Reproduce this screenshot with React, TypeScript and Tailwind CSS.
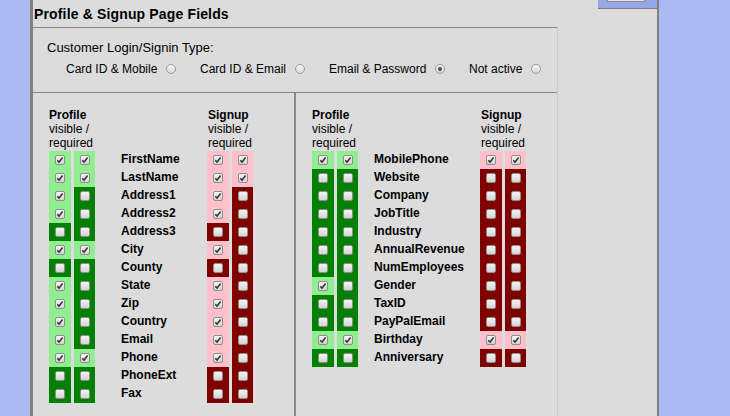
import React from "react";

type Row = [string, number, number, number, number];

const LEFT_ROWS: Row[] = [
  ["FirstName", 1, 1, 1, 1],
  ["LastName", 1, 1, 1, 1],
  ["Address1", 1, 0, 1, 0],
  ["Address2", 1, 0, 1, 0],
  ["Address3", 0, 0, 0, 0],
  ["City", 1, 1, 1, 0],
  ["County", 0, 0, 0, 0],
  ["State", 1, 0, 1, 0],
  ["Zip", 1, 0, 1, 0],
  ["Country", 1, 0, 1, 0],
  ["Email", 1, 0, 1, 0],
  ["Phone", 1, 1, 1, 0],
  ["PhoneExt", 0, 0, 0, 0],
  ["Fax", 0, 0, 0, 0],
];

const RIGHT_ROWS: Row[] = [
  ["MobilePhone", 1, 1, 1, 1],
  ["Website", 0, 0, 0, 0],
  ["Company", 0, 0, 0, 0],
  ["JobTitle", 0, 0, 0, 0],
  ["Industry", 0, 0, 0, 0],
  ["AnnualRevenue", 0, 0, 0, 0],
  ["NumEmployees", 0, 0, 0, 0],
  ["Gender", 1, 0, 0, 0],
  ["TaxID", 0, 0, 0, 0],
  ["PayPalEmail", 0, 0, 0, 0],
  ["Birthday", 1, 1, 1, 1],
  ["Anniversary", 0, 0, 0, 0],
];

const LOGIN_TYPES = [
  { label: "Card ID & Mobile", w: "w-[134px]", on: false },
  { label: "Card ID & Email", w: "w-[129px]", on: false },
  { label: "Email & Password", w: "w-[140px]", on: true },
  { label: "Not active", w: "w-[80px]", on: false },
];

function CheckBox({ on }: { on: boolean }) {
  return (
    <span className="flex h-[10px] w-[10px] items-center justify-center rounded-[2px] border border-[#8e8e8e] bg-gradient-to-b from-[#f4f4f4] to-[#d4d4d4]">
      {on && (
        <svg width="8" height="8" viewBox="0 0 8 8">
          <path
            d="M1.3 4.3 L3.1 6 L6.6 1.6"
            fill="none"
            stroke="#383838"
            strokeWidth="1.6"
          />
        </svg>
      )}
    </span>
  );
}

function Radio({ on }: { on: boolean }) {
  return (
    <span className="flex h-[10px] w-[10px] items-center justify-center rounded-full border border-[#9c9c9c] bg-gradient-to-b from-[#f7f7f7] to-[#d8d8d8]">
      {on && <span className="h-[4px] w-[4px] rounded-full bg-[#4a4a4a]" />}
    </span>
  );
}

function Cell({
  on,
  signup,
  width,
}: {
  on: boolean;
  signup?: boolean;
  width: string;
}) {
  const bg = signup
    ? on
      ? "bg-[#ffc0cb]"
      : "bg-[#800000]"
    : on
      ? "bg-[#90ee90]"
      : "bg-[#008000]";
  return (
    <div className={`flex h-[18px] items-center justify-center ${width} ${bg}`}>
      <CheckBox on={on} />
    </div>
  );
}

function ColHead({ title }: { title: string }) {
  return (
    <div className="w-[46px] whitespace-nowrap text-[12px] leading-[14px]">
      <div className="font-bold">{title}</div>
      <div>visible /</div>
      <div>required</div>
    </div>
  );
}

function FieldTable({
  rows,
  labelGap,
  labelWidth,
}: {
  rows: Row[];
  labelGap: string;
  labelWidth: string;
}) {
  return (
    <div className="pl-[16px] pt-[15px]">
      <div className="mb-[1px] flex">
        <ColHead title="Profile" />
        <div className={`${labelGap} ${labelWidth}`} />
        <div className="pl-[1px]">
          <ColHead title="Signup" />
        </div>
      </div>
      {rows.map(([name, pv, pr, sv, sr]) => (
        <div key={name} className="flex h-[18px]">
          <Cell on={!!pv} width="w-[22px]" />
          <div className="ml-[3px]">
            <Cell on={!!pr} width="w-[21px]" />
          </div>
          <div
            className={`${labelGap} ${labelWidth} h-[18px] whitespace-nowrap text-[12px] font-bold leading-[16px]`}
          >
            {name}
          </div>
          <Cell on={!!sv} signup width="w-[22px]" />
          <div className="ml-[3px]">
            <Cell on={!!sr} signup width="w-[21px]" />
          </div>
        </div>
      ))}
    </div>
  );
}

export default function App() {
  return (
    <div
      className="flex h-[416px] w-[730px] overflow-hidden bg-[#abbaf3] text-black"
      style={{ fontFamily: '"Liberation Sans", Arial, sans-serif' }}
    >
      <div className="w-[30px] shrink-0" />

      <div className="relative flex h-[416px] w-[629px] shrink-0 flex-col border-l-[3px] border-r-2 border-[#808080] bg-[#dcdcdc]">
        {/* cut-off control at the top right */}
        <div className="absolute right-0 top-0 h-[9px] w-[59px] border-b border-[#7d7d7d] bg-[#95a7e6]">
          <div className="ml-[9px] h-[2px] w-[38px] border border-t-0 border-[#8a8a8a] bg-[#e4e4e4]" />
        </div>

        <div className="h-[27px] pl-[1px] pt-[6px] text-[14px] font-bold leading-[16px] tracking-[0.15px]">
          Profile &amp; Signup Page Fields
        </div>

        <div className="flex w-[525px] flex-1 flex-col border-r border-t border-r-[#c9c9c9] border-t-[#888888]">
          <div className="border-b border-[#888888] pb-[16px] pl-[14px] pt-[12px]">
            <div className="text-[13px] leading-[15px]">Customer Login/Signin Type:</div>
            <div className="mt-[7px] flex pl-[19px] text-[12px] leading-[14px]">
              {LOGIN_TYPES.map((t) => (
                <div key={t.label} className={`flex items-center ${t.w}`}>
                  <span>{t.label}</span>
                  <span className="ml-[9px]">
                    <Radio on={t.on} />
                  </span>
                </div>
              ))}
            </div>
          </div>

          <div className="flex flex-1">
            <div className="w-[263px] border-r-2 border-r-[#8a8a8a]">
              <FieldTable rows={LEFT_ROWS} labelGap="ml-[26px]" labelWidth="w-[86px]" />
            </div>
            <div className="flex-1">
              <FieldTable rows={RIGHT_ROWS} labelGap="ml-[16px]" labelWidth="w-[106px]" />
            </div>
          </div>
        </div>
      </div>
    </div>
  );
}
